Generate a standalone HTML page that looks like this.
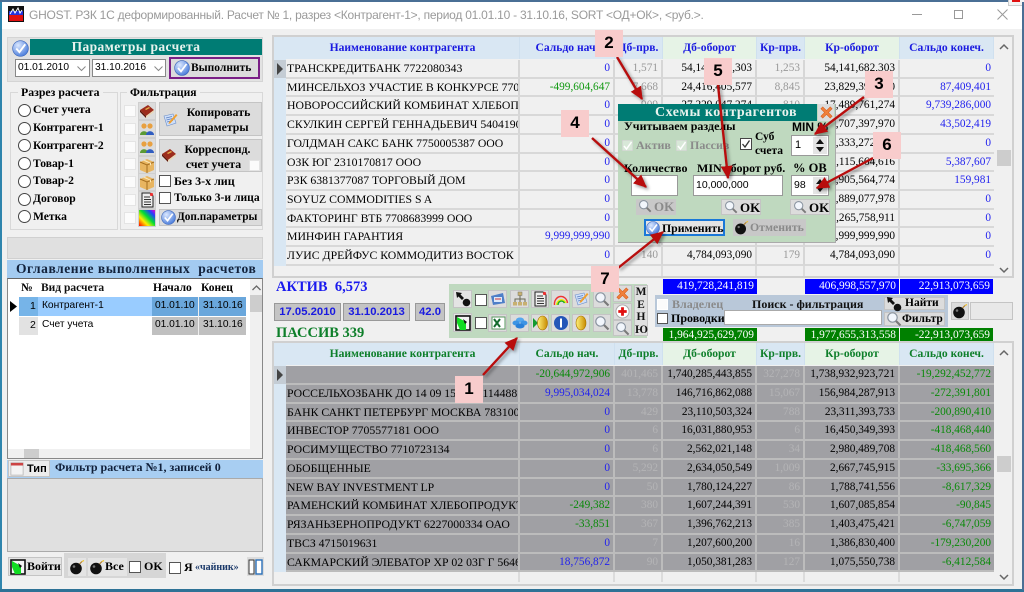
<!DOCTYPE html>
<html><head><meta charset="utf-8">
<style>
*{box-sizing:border-box}
html,body{margin:0;padding:0}
body{width:1024px;height:592px;overflow:hidden;position:relative;background:#fff;font-family:"Liberation Serif","Noto Serif CJK SC",serif;color:#000;filter:blur(.3px)}
.a{position:absolute;white-space:nowrap}
.s{font-family:"Liberation Sans","Noto Sans CJK SC",sans-serif}
.b{font-weight:bold}
.cb{position:absolute;width:12px;height:12px;background:#fff;border:1px solid #555}
.cbl{position:absolute;width:12px;height:12px;background:#fbfbfb;border:1px solid #e4e4e4}
.rd{position:absolute;width:13px;height:13px;border-radius:50%;background:#fff;border:1px solid #444}
.ib{position:absolute;width:18px;height:18px;background:#dcdcdc;border:1px solid #cfcfcf}
.btn{position:absolute;background:#dcdcdc;border:1px solid #c4c4c4;white-space:nowrap}
.ib svg,.btn svg{position:absolute}
.tb{position:absolute;background:#f0f0f0;border:2px solid #d0d0d0}
.rw{position:absolute;display:flex;height:18.75px;font-size:11.3px;line-height:17px}
.rw div{overflow:hidden;white-space:nowrap;text-align:right;padding-right:3px;border-right:2px solid #d6d6d6;border-bottom:2px solid #d8d8d8;height:18.75px}
.rw div:nth-child(1){width:234px;text-align:left;padding:0 0 0 1px;font-size:11.75px}
.rw div:nth-child(2){width:95px}.rw div:nth-child(3){width:48px;color:#999}.rw div:nth-child(4){width:94px}.rw div:nth-child(5){width:48px;color:#999}.rw div:nth-child(6){width:95px}.rw div:nth-child(7){width:94px;border-right:0}
.top div{background:#f0f0f0}
.bot div{background:#a0a0a4;border-color:#bcbcbc}
.bot div:nth-child(3),.bot div:nth-child(5){color:#b4b4b6}
.stub,.stub div{height:10px!important}
.stub div{background:#f0f0f0!important;border-bottom:0;border-color:#dcdcdc!important}
.u{color:#2222ee}.g{color:#119911}
.bot .g{color:#0a8a0a}
.hd{position:absolute;display:flex;height:22px;font-weight:bold;font-size:11.6px;line-height:21px;text-align:center}
.hd div{border-right:1px solid #cfe0ef;overflow:hidden;white-space:nowrap}
.hd .bl{background:#d9e7f3}.hd .gr{background:#e6f3e6}
.hu{color:#1a1ae0}.hg{color:#0e7f2a}
.pk{position:absolute;width:28px;height:27px;background:#f8cccc;font:bold 17px "Liberation Sans",sans-serif;text-align:center;line-height:26px}
.tot{position:absolute;color:#fff;text-align:right;padding-right:3px;font-size:11.4px;line-height:15px;height:15px}
.date{position:absolute;background:#c4c4c4;border:1px solid #999;color:#1a1ae0;font:bold 11.3px/16px "Liberation Sans",sans-serif;text-align:center;height:18px}
.rad{position:absolute;left:33px;font-weight:bold;font-size:11.6px;line-height:14px;white-space:nowrap}
</style></head><body>
<svg width="0" height="0" style="position:absolute">
<defs>
<radialGradient id="gc" cx=".35" cy=".3" r=".8"><stop offset="0" stop-color="#dbe8ff"/><stop offset="1" stop-color="#3f74d8"/></radialGradient>
<linearGradient id="gy" x1="0" x2="1"><stop offset="0" stop-color="#fff27a"/><stop offset="1" stop-color="#c88a00"/></linearGradient>
<linearGradient id="rb" x1="0" y1="1" x2="1" y2="0"><stop offset="0" stop-color="#ff0000"/><stop offset=".3" stop-color="#ffee00"/><stop offset=".55" stop-color="#00dd33"/><stop offset=".8" stop-color="#2040ff"/><stop offset="1" stop-color="#ee00cc"/></linearGradient>
<marker id="ah" markerWidth="5.5" markerHeight="5" refX="5" refY="2.5" orient="auto"><path d="M0 0L5.5 2.5L0 5z" fill="#b80d0d"/></marker>
<symbol id="chk" viewBox="0 0 16 16"><circle cx="8" cy="8" r="7.4" fill="url(#gc)" stroke="#3a64b8" stroke-width=".6"/><path d="M4 8l3 3.4L12.5 4" fill="none" stroke="#fff" stroke-width="1.8"/></symbol>
<symbol id="book" viewBox="0 0 16 16"><path d="M1 7L9 2l6 5-8 6z" fill="#9c2c1c"/><path d="M1 7l6 6v2L1 9z" fill="#5d1408"/><path d="M7 13l8-6v2l-8 6z" fill="#e8d8b8"/><path d="M6 6l4-2 1 1-4 2z" fill="#e6b04a"/></symbol>
<symbol id="ppl" viewBox="0 0 16 16"><circle cx="5" cy="5" r="2.6" fill="#e8a040"/><path d="M1 14c0-5 8-5 8 0z" fill="#5a9a34"/><circle cx="11" cy="5" r="2.6" fill="#e8a040"/><path d="M7 14c0-5 8-5 8 0z" fill="#2f5cc0"/></symbol>
<symbol id="box" viewBox="0 0 16 16"><path d="M1 5l7-3 7 3v8l-7 3-7-3z" fill="#e8b560"/><path d="M1 5l7 3 7-3M8 8v8" fill="none" stroke="#a56f20"/><path d="M4 3.5l7 3v2l1-.5v-2L6 3z" fill="#fbe7b8"/></symbol>
<symbol id="doc" viewBox="0 0 16 16"><path d="M3 1h8l3 3v11H3z" fill="#eee" stroke="#222"/><path d="M5 5h6M5 7.5h7M5 10h7M5 12.5h7" stroke="#333"/><circle cx="12.5" cy="2.5" r="1.6" fill="#e33"/></symbol>
<symbol id="rain" viewBox="0 0 16 16"><rect width="16" height="16" fill="url(#rb)"/></symbol>
<symbol id="edit" viewBox="0 0 16 16"><path d="M2 4l9-2 3 9-9 3z" fill="#cfe0fa" stroke="#6d8fc8" stroke-width=".6"/><path d="M4 6l6-1.5M4.5 8l6-1.5M5 10l6-1.5" stroke="#5a7ec0" stroke-width=".7"/><path d="M7 10l7-8 1.5 1.2-7 8L6.5 12z" fill="#f0a030"/></symbol>
<symbol id="bomb" viewBox="0 0 16 16"><circle cx="7" cy="9.5" r="5.8" fill="#111"/><circle cx="5" cy="7.5" r="1.3" fill="#777"/><path d="M10.5 5L13 2.5" stroke="#b08030" stroke-width="1.2"/><path d="M13 2.5l2-1" stroke="#f0c020"/></symbol>
<symbol id="lens" viewBox="0 0 16 16"><circle cx="6.5" cy="6.5" r="4.7" fill="#f2f6fc" stroke="#8a94a0" stroke-width="1.2"/><path d="M10 10l4.5 4.5" stroke="#7a7a7a" stroke-width="2.2"/></symbol>
<symbol id="arr" viewBox="0 0 16 16"><path d="M1 1l6 1-1.500 1.500L9 7 7 9 3.500 5.500 2 7z" fill="#111"/><circle cx="11.500" cy="11.500" r="3.800" fill="#111"/></symbol>
<symbol id="door" viewBox="0 0 16 16"><rect x="1" y="1" width="14" height="14" fill="#f4f4f4" stroke="#111" stroke-width="1.600"/><path d="M2 2l9 5v8H5L2 8z" fill="#11dd22"/><path d="M8 4l4 3-2 2z" fill="#111"/></symbol>
<symbol id="x" viewBox="0 0 16 16"><path d="M2 4l2-2 4 4 4-4 2 2-4 4 4 4-2 2-4-4-4 4-2-2 4-4z" fill="#f0803a" stroke="#d86020" stroke-width=".6"/></symbol>
<symbol id="coin" viewBox="0 0 16 16"><ellipse cx="8" cy="8" rx="5" ry="7" fill="url(#gy)" stroke="#a87400" stroke-width=".6"/></symbol>
<symbol id="info" viewBox="0 0 16 16"><circle cx="8" cy="8" r="7" fill="#2456b8"/><rect x="7" y="3.500" width="2" height="9" fill="#fff"/></symbol>
<symbol id="xl" viewBox="0 0 16 16"><rect x="2" y="2" width="13" height="12" fill="#fff" stroke="#5a9a60"/><path d="M4 4l6 8M10 4l-6 8" stroke="#136b2e" stroke-width="2"/></symbol>
<symbol id="tree" viewBox="0 0 16 16"><rect x="6" y="1" width="4" height="3.500" fill="#c8b070" stroke="#776"  stroke-width=".5"/><path d="M8 4.500V8M3 11V8h10v3M8 8v3" stroke="#665" fill="none"/><rect x="1" y="11" width="4" height="3.500" fill="#c8b070"/><rect x="6" y="11" width="4" height="3.500" fill="#c8b070"/><rect x="11" y="11" width="4" height="3.500" fill="#c8b070"/></symbol>
<symbol id="cal" viewBox="0 0 16 16"><path d="M1 5l12-3 2 10-12 2z" fill="#4e7fc8"/><rect x="4" y="6" width="8" height="5" fill="#dce8fa"/><path d="M5 8h6" stroke="#c33"/></symbol>
<symbol id="arc" viewBox="0 0 16 16"><path d="M1.500 14A6.500 7.500 0 0 1 14.500 12" fill="none" stroke="#e33" stroke-width="1.400"/><path d="M3.500 14A5 5.500 0 0 1 13 12" fill="none" stroke="#ee0" stroke-width="1.400"/><path d="M5 14A3.500 4 0 0 1 11.500 12" fill="none" stroke="#2a2" stroke-width="1.400"/></symbol>
<symbol id="cloud" viewBox="0 0 16 16"><ellipse cx="8" cy="5" rx="4" ry="2.500" fill="#56a8ee"/><ellipse cx="4" cy="8" rx="3.500" ry="2.500" fill="#3e94e4"/><ellipse cx="12" cy="8" rx="3.500" ry="2.500" fill="#3e94e4"/><ellipse cx="8" cy="11" rx="4.500" ry="2.500" fill="#2a80d8"/></symbol>
<symbol id="plus" viewBox="0 0 16 16"><circle cx="8" cy="8" r="7" fill="#fff" stroke="#aaa"/><path d="M8 3.500v9M3.500 8h9" stroke="#e01010" stroke-width="3"/></symbol>
<symbol id="cal2" viewBox="0 0 16 16"><rect x="1" y="1" width="14" height="14" fill="#f4f4f4" stroke="#bbb"/><rect x="1" y="1" width="14" height="3" fill="#cc4444"/></symbol>
</defs></svg>

<!-- window frame -->
<div class="a" style="left:0;top:0;width:1024px;height:2px;background:#4a6f95"></div>
<svg class="a" style="left:8px;top:6px" width="16" height="16" viewBox="0 0 16 16"><rect width="16" height="16" fill="#111"/><rect x="1" y="5" width="14" height="5" fill="#eef"/><rect x="1" y="9" width="14" height="6" fill="#e01010"/><rect x="1" y="5" width="14" height="4" fill="#2233dd"/><path d="M2 8l3-5 2 4 3-5 2 5 2-3" stroke="#fff" fill="none"/></svg>
<div class="a s" style="left:29px;top:7px;font-size:12px;line-height:16px;color:#9a9a9a;letter-spacing:-.02em">GHOST. РЗК 1С деформированный. Расчет № 1, разрез &lt;Контрагент-1&gt;, период 01.01.10 - 31.10.16, SORT &lt;ОД+ОК&gt;, &lt;руб.&gt;.</div>
<div class="a" style="left:912px;top:14px;width:10px;height:1px;background:#999"></div>
<div class="a" style="left:954px;top:10px;width:9px;height:9px;border:1px solid #999"></div>
<svg class="a" style="left:997px;top:9px" width="11" height="11"><path d="M.5.500l10 10M10.500.500l-10 10" stroke="#999"/></svg>
<div class="a" style="left:1008px;top:0;width:16px;height:6px;background:#f4f4f4;border-left:1px solid #ccc;border-bottom:1px solid #ccc"></div>
<div class="a" style="left:1012px;top:0;width:8px;height:2px;background:#e01010"></div>
<div class="a" style="left:2px;top:29px;width:1020px;height:560px;background:#f0f0f0"></div>
<div class="a" style="left:0;top:2px;width:2px;height:588px;background:#2f85ad"></div>
<div class="a" style="left:0;top:589px;width:1024px;height:3px;background:#2e7296"></div>
<div class="a" style="left:1022px;top:2px;width:2px;height:588px;background:#4a6f95"></div>

<!-- left top -->
<div class="a" style="left:7px;top:37px;width:256px;height:45px;background:#e2e2e2;border:1px solid #d4d4d4"></div>
<svg class="a" style="left:12px;top:40px" width="17" height="17"><use href="#chk"/></svg>
<div class="a b" style="left:30px;top:39px;width:232px;height:16px;background:#007c74;color:#e8f3ee;text-align:center;font-size:13.5px;line-height:15px;letter-spacing:.4px;padding-right:20px">Параметры расчета</div>
<div class="a s" style="left:15px;top:59px;width:75px;height:18px;background:#fff;border:1px solid #888;font-size:10.200px;line-height:15px;padding-left:2px">01.01.2010</div>
<div class="a s" style="left:92px;top:59px;width:74px;height:18px;background:#fff;border:1px solid #888;font-size:10.200px;line-height:15px;padding-left:2px">31.10.2016</div>
<svg class="a" style="left:77px;top:66px" width="9" height="6"><path d="M.5.500L4.500 4.500 8.500.500" fill="none" stroke="#888"/></svg>
<svg class="a" style="left:154px;top:66px" width="9" height="6"><path d="M.5.500L4.500 4.500 8.500.500" fill="none" stroke="#888"/></svg>
<div class="a" style="left:169px;top:57px;width:91px;height:22px;background:#dcdcdc;border:2px solid #7a1f86"></div>
<svg class="a" style="left:174px;top:60px" width="16" height="16"><use href="#chk"/></svg>
<div class="a b" style="left:191px;top:60px;font-size:11.500px;line-height:16px">Выполнить</div>

<!-- groups -->
<div class="a" style="left:10px;top:92px;width:108px;height:138px;border:1px solid #d8d8d8"></div>
<div class="a b" style="left:18px;top:85px;padding:0 3px;background:#f0f0f0;font-size:11.800px;line-height:15px">Разрез расчета</div>
<div class="a" style="left:120px;top:92px;width:143px;height:138px;border:1px solid #d8d8d8"></div>
<div class="a b" style="left:127px;top:85px;padding:0 3px;background:#f0f0f0;font-size:11.600px;line-height:15px">Фильтрация</div>

<div class="rd" style="left:18px;top:104px"></div><div class="rad" style="top:103px">Счет учета</div>
<div class="rd" style="left:18px;top:122px"></div><div class="rad" style="top:121px">Контрагент-1</div>
<div class="rd" style="left:18px;top:139px"></div><div class="rad" style="top:139px">Контрагент-2</div>
<div class="rd" style="left:18px;top:157px"></div><div class="rad" style="top:157px">Товар-1</div>
<div class="rd" style="left:18px;top:175px"></div><div class="rad" style="top:174px">Товар-2</div>
<div class="rd" style="left:18px;top:193px"></div><div class="rad" style="top:192px">Договор</div>
<div class="rd" style="left:18px;top:210px"></div><div class="rad" style="top:210px">Метка</div>

<div class="cbl" style="left:124px;top:105px"></div><div class="ib" style="left:138px;top:102px"><svg style="left:0;top:0" width="16" height="16"><use href="#book"/></svg></div>
<div class="cbl" style="left:124px;top:123px"></div><div class="ib" style="left:138px;top:120px"><svg style="left:0;top:0" width="16" height="16"><use href="#ppl"/></svg></div>
<div class="cbl" style="left:124px;top:141px"></div><div class="ib" style="left:138px;top:138px"><svg style="left:0;top:0" width="16" height="16"><use href="#ppl"/></svg></div>
<div class="cbl" style="left:124px;top:158px"></div><div class="ib" style="left:138px;top:156px"><svg style="left:0;top:0" width="16" height="16"><use href="#box"/></svg></div>
<div class="cbl" style="left:124px;top:176px"></div><div class="ib" style="left:138px;top:173px"><svg style="left:0;top:0" width="16" height="16"><use href="#box"/></svg></div>
<div class="cbl" style="left:124px;top:194px"></div><div class="ib" style="left:138px;top:191px"><svg style="left:0;top:0" width="16" height="16"><use href="#doc"/></svg></div>
<div class="cbl" style="left:124px;top:212px"></div><div class="ib" style="left:138px;top:209px"><svg style="left:0;top:0" width="16" height="16"><use href="#rain"/></svg></div>

<div class="btn b" style="left:159px;top:102px;width:103px;height:34px;font-size:11.800px;line-height:14.500px;text-align:center;padding:2px 0 0 16px"><svg style="left:2px;top:9px" width="16" height="16"><use href="#edit"/></svg>Копировать<br>параметры</div>
<div class="btn b" style="left:159px;top:139px;width:103px;height:33px;font-size:11.800px;line-height:14.500px;text-align:center;padding:2px 0 0 14px"><svg style="left:1px;top:7px" width="16" height="16"><use href="#book"/></svg>Корреспонд.<br><span style="margin-right:8px">счет учета</span></div>
<div class="cbl" style="left:249px;top:160px;width:11px;height:11px"></div>
<div class="cb" style="left:159px;top:175px"></div><div class="a b" style="left:174px;top:174px;font-size:12px;line-height:14px">Без 3-х лиц</div>
<div class="cb" style="left:159px;top:192px"></div><div class="a b" style="left:174px;top:191px;font-size:11.600px;line-height:14px">Только 3-и лица</div>
<div class="btn b" style="left:159px;top:209px;width:103px;height:17px;font-size:11.300px;line-height:15px;padding-left:17px"><svg style="left:1px;top:0" width="15" height="15"><use href="#chk"/></svg>Доп.параметры</div>

<div class="a" style="left:7px;top:237px;width:256px;height:22px;background:#e0e0e0;border:1px solid #d0d0d0"></div>

<!-- history -->
<div class="a b" style="left:7px;top:260px;width:256px;height:18px;background:#a3cbf1;color:#12223c;font-size:13.500px;line-height:17px;padding-left:9px;letter-spacing:.55px;white-space:pre">Оглавление выполненных  расчетов</div>
<div class="a" style="left:7px;top:278px;width:256px;height:181px;background:#fff;border:1px solid #888;border-top:1px solid #666"></div>
<div class="a b" style="left:21px;top:281px;font-size:11.500px;line-height:15px">№</div>
<div class="a b" style="left:41px;top:281px;font-size:11.500px;line-height:15px;color:#111">Вид расчета</div>
<div class="a b" style="left:153px;top:281px;font-size:11.500px;line-height:15px">Начало</div>
<div class="a b" style="left:201px;top:281px;font-size:11.500px;line-height:15px">Конец</div>
<div class="a" style="left:19px;top:297px;width:19px;height:19px;background:#76b4e8"></div>
<div class="a" style="left:38px;top:297px;width:114px;height:19px;background:#99ccff"></div>
<div class="a" style="left:152px;top:297px;width:94px;height:19px;background:#6aa7dc"></div>
<div class="a" style="left:19px;top:317px;width:19px;height:18px;background:#e2e2e2"></div>
<div class="a" style="left:152px;top:317px;width:94px;height:18px;background:#c0c0c0"></div>
<div class="a" style="left:198px;top:297px;width:1px;height:38px;background:#eee"></div>
<svg class="a" style="left:10px;top:301px" width="7" height="11"><path d="M0 0l7 5.500L0 11z" fill="#000"/></svg>
<div class="a s" style="left:30px;top:299px;font-size:10.500px;line-height:14px">1</div>
<div class="a s" style="left:30px;top:318px;font-size:10.500px;line-height:14px">2</div>
<div class="a s" style="left:42px;top:299px;font-size:10.200px;line-height:14px">Контрагент-1</div>
<div class="a s" style="left:42px;top:318px;font-size:10.200px;line-height:14px">Счет учета</div>
<div class="a s" style="left:155px;top:299px;font-size:10.200px;line-height:14px">01.01.10</div>
<div class="a s" style="left:155px;top:318px;font-size:10.200px;line-height:14px">01.01.10</div>
<div class="a s" style="left:203px;top:299px;font-size:10.200px;line-height:14px">31.10.16</div>
<div class="a s" style="left:203px;top:318px;font-size:10.200px;line-height:14px">31.10.16</div>
<div class="a" style="left:250px;top:279px;width:12px;height:170px;background:#f0f0f0"></div>
<div class="a" style="left:250px;top:295px;width:12px;height:17px;background:#cdcdcd"></div>
<svg class="a" style="left:252px;top:285px" width="9" height="6"><path d="M.5 5L4.500 1 8.500 5" fill="none" stroke="#666" stroke-width="1.300"/></svg>
<div class="a" style="left:8px;top:449px;width:254px;height:9px;background:#f0f0f0"></div>
<div class="a" style="left:24px;top:449px;width:15px;height:9px;background:#cdcdcd"></div>

<div class="a" style="left:7px;top:460px;width:256px;height:18px;background:#a8cef2"></div>
<div class="btn b s" style="left:8px;top:460px;width:42px;height:17px;background:#ececec;font-size:11px;line-height:16px;padding-left:18px"><svg style="left:1px;top:1px" width="14" height="14"><use href="#cal2"/></svg>Тип</div>
<div class="a b" style="left:55px;top:460px;font-size:12px;line-height:15px;color:#10203a">Фильтр расчета №1, записей 0</div>
<div class="a" style="left:7px;top:478px;width:256px;height:74px;background:#e0e0e0;border:1px solid #aaa"></div>

<div class="btn b" style="left:8px;top:557px;width:54px;height:19px;background:#e4e4e4;font-size:12px;line-height:17px;padding-left:18px"><svg style="left:1px;top:1px" width="16" height="16"><use href="#door"/></svg>Войти</div>
<div class="a" style="left:64px;top:553px;width:102px;height:25px;background:#d6d6d6"></div>
<div class="btn" style="left:68px;top:558px;width:18px;height:18px;background:#e4e4e4;border:0"><svg style="left:1px;top:1px" width="16" height="16"><use href="#bomb"/></svg></div>
<div class="btn b" style="left:88px;top:558px;width:39px;height:18px;background:#e4e4e4;border:0;font-size:12px;line-height:16px;padding-left:17px"><svg style="left:1px;top:1px" width="16" height="16"><use href="#bomb"/></svg>Все</div>
<div class="cb" style="left:129px;top:561px"></div><div class="a b" style="left:144px;top:559px;font-size:12px;line-height:15px">OK</div>
<div class="cb" style="left:169px;top:562px"></div><div class="a b" style="left:184px;top:560px;font-size:12px;line-height:15px">Я</div>
<div class="a b" style="left:195px;top:561px;font-size:10px;line-height:14px;color:#1c3a6a">«чайник»</div>
<svg class="a" style="left:247px;top:557px" width="17" height="19" viewBox="0 0 17 19"><rect width="17" height="19" fill="#dcdcdc"/><rect x="2" y="3" width="5" height="14" fill="#fff" stroke="#333"/><rect x="9" y="3" width="6" height="14" fill="#fff" stroke="#2a6fb8" stroke-width="1.400"/></svg>

<!-- top table -->
<div class="tb" style="left:272px;top:35px;width:742px;height:243px"></div>
<div class="a" style="left:274px;top:37px;width:12px;height:229px;background:#d9e7f3"></div>
<div class="hd hu" style="left:286px;top:37px"><div class="bl" style="width:234px">Наименование контрагента</div><div class="bl" style="width:95px">Сальдо нач.</div><div class="bl" style="width:48px">Дб-прв.</div><div class="gr" style="width:94px">Дб-оборот</div><div class="bl" style="width:48px">Кр-прв.</div><div class="gr" style="width:95px">Кр-оборот</div><div class="bl" style="width:94px">Сальдо конеч.</div></div>
<div class="a" style="left:274px;top:60px;width:12px;height:18px;background:#c4ccd4"></div>
<svg class="a" style="left:277px;top:63px" width="6" height="12"><path d="M0 0l6 6-6 6z" fill="#444"/></svg>
<div class="rw top" style="left:286px;top:60px"><div>ТРАНСКРЕДИТБАНК 7722080343</div><div class="u">0</div><div>1,571</div><div>54,141,682,303</div><div>1,253</div><div>54,141,682,303</div><div class="u">0</div></div>
<div class="rw top" style="left:286px;top:78.700px"><div>МИНСЕЛЬХОЗ УЧАСТИЕ В КОНКУРСЕ 7704</div><div class="g">-499,604,647</div><div>7,668</div><div>24,416,405,577</div><div>8,845</div><div>23,829,391,000</div><div class="u">87,409,401</div></div>
<div class="rw top" style="left:286px;top:97.400px"><div>НОВОРОССИЙСКИЙ КОМБИНАТ ХЛЕБОПРОДУКТОВ</div><div class="u">0</div><div>909</div><div>27,229,047,274</div><div>810</div><div>17,489,761,274</div><div class="u">9,739,286,000</div></div>
<div class="rw top" style="left:286px;top:116.100px"><div>СКУЛКИН СЕРГЕЙ ГЕННАДЬЕВИЧ 5404190</div><div class="u">0</div><div>52</div><div>14,750,900,389</div><div>60</div><div>14,707,397,970</div><div class="u">43,502,419</div></div>
<div class="rw top" style="left:286px;top:134.800px"><div>ГОЛДМАН САКС БАНК 7750005387 ООО</div><div class="u">0</div><div>40</div><div>13,333,272,100</div><div>44</div><div>13,333,272,100</div><div class="u">0</div></div>
<div class="rw top" style="left:286px;top:153.500px"><div>ОЗК ЮГ 2310170817 ООО</div><div class="u">0</div><div>31</div><div>12,121,052,223</div><div>35</div><div>12,115,664,616</div><div class="u">5,387,607</div></div>
<div class="rw top" style="left:286px;top:172.200px"><div>РЗК 6381377087 ТОРГОВЫЙ ДОМ</div><div class="u">0</div><div>29</div><div>11,905,724,755</div><div>30</div><div>11,905,564,774</div><div class="u">159,981</div></div>
<div class="rw top" style="left:286px;top:190.900px"><div>SOYUZ COMMODITIES S A</div><div class="u">0</div><div>20</div><div>10,889,077,978</div><div>22</div><div>10,889,077,978</div><div class="u">0</div></div>
<div class="rw top" style="left:286px;top:209.600px"><div>ФАКТОРИНГ ВТБ 7708683999 ООО</div><div class="u">0</div><div>18</div><div>10,265,758,911</div><div>19</div><div>10,265,758,911</div><div class="u">0</div></div>
<div class="rw top" style="left:286px;top:228.300px"><div>МИНФИН ГАРАНТИЯ</div><div class="u">9,999,999,990</div><div>12</div><div>9,999,999,990</div><div>14</div><div>9,999,999,990</div><div class="u">0</div></div>
<div class="rw top" style="left:286px;top:247px"><div>ЛУИС ДРЕЙФУС КОММОДИТИЗ ВОСТОК</div><div class="u">0</div><div>140</div><div>4,784,093,090</div><div>179</div><div>4,784,093,090</div><div class="u">0</div></div>
<div class="rw stub" style="left:286px;top:266px"><div></div><div></div><div></div><div></div><div></div><div></div><div></div></div>
<svg class="a" style="left:999px;top:43px" width="10" height="7"><path d="M1 6L5 2l4 4" fill="none" stroke="#666" stroke-width="1.500"/></svg>
<svg class="a" style="left:999px;top:267px" width="10" height="7"><path d="M1 1l4 4 4-4" fill="none" stroke="#666" stroke-width="1.500"/></svg>
<div class="a" style="left:997px;top:150px;width:14px;height:16px;background:#cdcdcd"></div>

<!-- middle -->
<div class="a b" style="left:276px;top:279px;font-size:14.500px;line-height:17px;color:#1a1aee;white-space:pre">АКТИВ  6,573</div>
<div class="date" style="left:274px;top:303px;width:67px">17.05.2010</div>
<div class="date" style="left:343px;top:303px;width:67px">31.10.2013</div>
<div class="date" style="left:415px;top:303px;width:30px">42.0</div>
<div class="a b" style="left:276px;top:325px;font-size:14.500px;line-height:17px;color:#0e7f2a">ПАССИВ 339</div>

<div class="a" style="left:449px;top:284px;width:198px;height:54px;background:#bfd9bf"></div>
<div class="btn" style="left:453px;top:290px;width:19px;height:18px;background:#e4e4e4"><svg style="left:1px;top:0" width="16" height="16"><use href="#arr"/></svg></div>
<div class="cb" style="left:475px;top:294px"></div>
<div class="btn" style="left:488px;top:290px;width:19px;height:18px"><svg style="left:1px;top:0" width="16" height="16"><use href="#cal"/></svg></div>
<div class="btn" style="left:510px;top:290px;width:19px;height:18px"><svg style="left:1px;top:0" width="16" height="16"><use href="#tree"/></svg></div>
<div class="btn" style="left:531px;top:290px;width:18px;height:18px"><svg style="left:0;top:0" width="16" height="16"><use href="#doc"/></svg></div>
<div class="btn" style="left:551px;top:290px;width:19px;height:18px"><svg style="left:1px;top:0" width="16" height="16"><use href="#arc"/></svg></div>
<div class="btn" style="left:572px;top:290px;width:18px;height:18px"><svg style="left:0;top:0" width="16" height="16"><use href="#edit"/></svg></div>
<div class="btn" style="left:593px;top:290px;width:18px;height:18px"><svg style="left:0;top:0" width="16" height="16"><use href="#lens"/></svg></div>
<div class="btn" style="left:453px;top:313px;width:19px;height:19px;background:#e4e4e4"><svg style="left:1px;top:1px" width="16" height="16"><use href="#door"/></svg></div>
<div class="cb" style="left:475px;top:317px"></div>
<div class="btn" style="left:488px;top:314px;width:19px;height:18px"><svg style="left:1px;top:0" width="16" height="16"><use href="#xl"/></svg></div>
<div class="btn" style="left:510px;top:314px;width:19px;height:18px"><svg style="left:1px;top:0" width="16" height="16"><use href="#cloud"/></svg></div>
<div class="btn" style="left:531px;top:314px;width:18px;height:18px"><svg style="left:0;top:0" width="16" height="16"><path d="M1 3l5 5-5 5z" fill="#149a30"/><ellipse cx="10.500" cy="8" rx="5" ry="7" fill="url(#gy)" stroke="#a87400" stroke-width=".6"/></svg></div>
<div class="btn" style="left:551px;top:314px;width:19px;height:18px"><svg style="left:1px;top:0" width="16" height="16"><use href="#info"/></svg></div>
<div class="btn" style="left:572px;top:314px;width:18px;height:18px"><svg style="left:0;top:0" width="16" height="16"><use href="#coin"/></svg></div>
<div class="btn" style="left:593px;top:314px;width:18px;height:18px"><svg style="left:0;top:0" width="16" height="16"><use href="#lens"/></svg></div>
<div class="btn" style="left:613px;top:285px;width:19px;height:17px"><svg style="left:1px;top:0" width="15" height="15"><use href="#x"/></svg></div>
<div class="btn" style="left:613px;top:303px;width:19px;height:17px"><svg style="left:1px;top:0" width="15" height="15"><use href="#plus"/></svg></div>
<div class="btn" style="left:613px;top:320px;width:19px;height:16px"><svg style="left:1px;top:0" width="15" height="15"><use href="#lens"/></svg></div>
<div class="btn b" style="left:634px;top:285px;width:14px;height:51px;font-size:11.500px;line-height:12.500px;text-align:center;color:#111;background:#e0e0e0">М<br>Е<br>Н<br>Ю</div>

<div class="tot" style="left:663px;top:279px;width:94px;background:#0000ff">419,728,241,819</div>
<div class="tot" style="left:805px;top:279px;width:94px;background:#0000ff">406,998,557,970</div>
<div class="tot" style="left:900px;top:279px;width:93px;background:#0000ff">22,913,073,659</div>
<div class="tot" style="left:663px;top:328px;width:94px;background:#008000">1,964,925,629,709</div>
<div class="tot" style="left:805px;top:328px;width:94px;background:#008000">1,977,655,313,558</div>
<div class="tot" style="left:900px;top:328px;width:93px;background:#008000">-22,913,073,659</div>

<div class="a" style="left:655px;top:295px;width:293px;height:32px;background:#b9c8d9"></div>
<div class="cbl" style="left:657px;top:299px;width:11px;height:11px;border-color:#fff"></div>
<div class="a b" style="left:672px;top:297px;font-size:12px;line-height:15px;color:#8a8a8a">Владелец</div>
<div class="a b" style="left:752px;top:297px;font-size:12px;line-height:15px;color:#111">Поиск - фильтрация</div>
<div class="cb" style="left:657px;top:313px;width:11px;height:11px"></div>
<div class="a b" style="left:671px;top:311px;font-size:12px;line-height:15px">Проводки</div>
<div class="a" style="left:724px;top:310px;width:158px;height:15px;background:#fff;border:1px solid #aaa"></div>
<div class="btn b" style="left:884px;top:297px;width:61px;height:13px;font-size:11.500px;line-height:11px;padding-left:20px"><svg style="left:1px;top:-2px" width="16" height="16"><use href="#arr"/></svg>Найти</div>
<div class="btn b" style="left:884px;top:312px;width:61px;height:14px;font-size:11.500px;line-height:12px;padding-left:17px"><svg style="left:1px;top:-2px" width="16" height="16"><use href="#lens"/></svg>Фильтр</div>
<div class="btn" style="left:951px;top:302px;width:18px;height:18px;background:#dcdcdc"><svg style="left:0;top:0" width="16" height="16"><use href="#bomb"/></svg></div>
<div class="btn" style="left:970px;top:302px;width:43px;height:18px;background:#e8e8e8"></div>

<!-- bottom table -->
<div class="tb" style="left:272px;top:341px;width:742px;height:245px"></div>
<div class="a" style="left:274px;top:343px;width:12px;height:229px;background:#d9e7f3"></div>
<div class="hd hg" style="left:286px;top:343px"><div class="bl" style="width:234px">Наименование контрагента</div><div class="bl" style="width:95px">Сальдо нач.</div><div class="bl" style="width:48px">Дб-прв.</div><div class="gr" style="width:94px">Дб-оборот</div><div class="bl" style="width:48px">Кр-прв.</div><div class="gr" style="width:95px">Кр-оборот</div><div class="bl" style="width:94px">Сальдо конеч.</div></div>
<div class="a" style="left:274px;top:366px;width:12px;height:18px;background:#c4ccd4"></div>
<svg class="a" style="left:277px;top:369px" width="6" height="12"><path d="M0 0l6 6-6 6z" fill="#444"/></svg>
<div class="rw bot" style="left:286px;top:366px"><div></div><div class="g">-20,644,972,906</div><div>401,465</div><div>1,740,285,443,855</div><div>327,278</div><div>1,738,932,923,721</div><div class="g">-19,292,452,772</div></div>
<div class="rw bot" style="left:286px;top:384.750px"><div>РОССЕЛЬХОЗБАНК ДО 14 09 15 7725114488 ОАО</div><div class="u">9,995,034,024</div><div>13,778</div><div>146,716,862,088</div><div>15,067</div><div>156,984,287,913</div><div class="g">-272,391,801</div></div>
<div class="rw bot" style="left:286px;top:403.500px"><div>БАНК САНКТ ПЕТЕРБУРГ МОСКВА 7831000</div><div class="u">0</div><div>429</div><div>23,110,503,324</div><div>788</div><div>23,311,393,733</div><div class="g">-200,890,410</div></div>
<div class="rw bot" style="left:286px;top:422.250px"><div>ИНВЕСТОР 7705577181 ООО</div><div class="u">0</div><div>6</div><div>16,031,880,953</div><div>6</div><div>16,450,349,393</div><div class="g">-418,468,440</div></div>
<div class="rw bot" style="left:286px;top:441px"><div>РОСИМУЩЕСТВО 7710723134</div><div class="u">0</div><div>6</div><div>2,562,021,148</div><div>34</div><div>2,980,489,708</div><div class="g">-418,468,560</div></div>
<div class="rw bot" style="left:286px;top:459.750px"><div>ОБОБЩЕННЫЕ</div><div class="u">0</div><div>5,292</div><div>2,634,050,549</div><div>1,009</div><div>2,667,745,915</div><div class="g">-33,695,366</div></div>
<div class="rw bot" style="left:286px;top:478.500px"><div>NEW BAY INVESTMENT LP</div><div class="u">0</div><div>50</div><div>1,780,124,227</div><div>86</div><div>1,788,741,556</div><div class="g">-8,617,329</div></div>
<div class="rw bot" style="left:286px;top:497.250px"><div>РАМЕНСКИЙ КОМБИНАТ ХЛЕБОПРОДУКТОВ</div><div class="g">-249,382</div><div>380</div><div>1,607,244,391</div><div>530</div><div>1,607,085,854</div><div class="g">-90,845</div></div>
<div class="rw bot" style="left:286px;top:516px"><div>РЯЗАНЬЗЕРНОПРОДУКТ 6227000334 ОАО</div><div class="g">-33,851</div><div>367</div><div>1,396,762,213</div><div>385</div><div>1,403,475,421</div><div class="g">-6,747,059</div></div>
<div class="rw bot" style="left:286px;top:534.750px"><div>ТВСЗ 4715019631</div><div class="u">0</div><div>7</div><div>1,207,600,200</div><div>16</div><div>1,386,830,400</div><div class="g">-179,230,200</div></div>
<div class="rw bot" style="left:286px;top:553.500px"><div>САКМАРСКИЙ ЭЛЕВАТОР ХР 02 03Г Г 5646</div><div class="u">18,756,872</div><div>90</div><div>1,050,381,283</div><div>127</div><div>1,075,550,738</div><div class="g">-6,412,584</div></div>
<div class="rw stub" style="left:286px;top:572px"><div></div><div></div><div></div><div></div><div></div><div></div><div></div></div>
<svg class="a" style="left:999px;top:349px" width="10" height="7"><path d="M1 6L5 2l4 4" fill="none" stroke="#666" stroke-width="1.500"/></svg>
<svg class="a" style="left:999px;top:574px" width="10" height="7"><path d="M1 1l4 4 4-4" fill="none" stroke="#666" stroke-width="1.500"/></svg>
<div class="a" style="left:997px;top:456px;width:14px;height:16px;background:#cdcdcd"></div>

<!-- dialog -->
<div class="a" style="left:618px;top:104px;width:218px;height:139px;background:#bfd9bf;border-right:1px solid #aaa;border-bottom:1px solid #aaa"></div>
<div class="a b" style="left:618px;top:104px;width:199px;height:17px;background:#007c74;color:#e8f3ee;font-size:14px;line-height:17px;text-align:center;letter-spacing:.5px;padding-left:17px">Схемы контрагентов</div>
<div class="a" style="left:818px;top:104px;width:16px;height:17px;background:#dcdcdc"></div>
<svg class="a" style="left:819px;top:105px" width="15" height="15"><use href="#x"/></svg>
<div class="a b" style="left:624px;top:119px;font-size:12px;line-height:15px">Учитываем разделы</div>
<svg class="a" style="left:622px;top:140px" width="11" height="11"><rect width="11" height="11" fill="#d8e8d8" stroke="#ccc"/><path d="M2 6l2.500 3L9.500 2" fill="none" stroke="#fff" stroke-width="1.500"/></svg>
<div class="a b" style="left:636px;top:138px;font-size:12px;line-height:15px;color:#8a8a8a">Актив</div>
<svg class="a" style="left:676px;top:140px" width="11" height="11"><rect width="11" height="11" fill="#d8e8d8" stroke="#ccc"/><path d="M2 6l2.500 3L9.500 2" fill="none" stroke="#fff" stroke-width="1.500"/></svg>
<div class="a b" style="left:690px;top:138px;font-size:12px;line-height:15px;color:#8a8a8a">Пассив</div>
<svg class="a" style="left:740px;top:138px" width="12" height="12"><rect x=".5" y=".5" width="11" height="11" fill="#fff" stroke="#444"/><path d="M2.500 6l2.500 3L9.500 2.500" fill="none" stroke="#333" stroke-width="1.300"/></svg>
<div class="a b" style="left:755px;top:131px;font-size:11.500px;line-height:13.500px">Суб<br>счета</div>
<div class="a b s" style="left:792px;top:120px;font-size:12px;line-height:14px">MIN %</div>
<div class="a s" style="left:791px;top:135px;width:38px;height:21px;background:#fff;border:1px solid #999;font-size:11px;line-height:19px;padding-left:3px">1</div>
<div class="a" style="left:813px;top:137px;width:14px;height:17px;background:#e4e4e4"></div>
<svg class="a" style="left:814px;top:138px" width="12" height="15"><path d="M2 6l4-5 4 5zM2 9l4 5 4-5z" fill="#111"/></svg>
<div class="a b" style="left:624px;top:161px;font-size:12px;line-height:15px">Количество</div>
<div class="a b" style="left:697px;top:161px;font-size:12px;line-height:15px">MIN оборот руб.</div>
<div class="a b" style="left:793px;top:161px;font-size:12.500px;line-height:15px">% ОВ</div>
<div class="a" style="left:631px;top:175px;width:47px;height:21px;background:#fff;border:1px solid #999"></div>
<div class="a s" style="left:693px;top:175px;width:90px;height:21px;background:#fff;border:1px solid #999;font-size:10.500px;line-height:19px;padding-left:2px">10,000,000</div>
<div class="a s" style="left:791px;top:175px;width:38px;height:21px;background:#fff;border:1px solid #999;font-size:10.500px;line-height:19px;padding-left:2px">98</div>
<div class="a" style="left:813px;top:177px;width:14px;height:17px;background:#e4e4e4"></div>
<svg class="a" style="left:814px;top:178px" width="12" height="15"><path d="M2 6l4-5 4 5zM2 9l4 5 4-5z" fill="#111"/></svg>
<div class="btn b" style="left:636px;top:199px;width:40px;height:16px;background:#c8c8c8;border:0;color:#8a8a8a;font-size:13px;line-height:16px;padding-left:18px"><svg style="left:2px;top:0" width="14" height="14"><use href="#lens"/></svg>OK</div>
<div class="btn b" style="left:721px;top:199px;width:40px;height:16px;font-size:13px;line-height:16px;padding-left:18px"><svg style="left:2px;top:0" width="14" height="14"><use href="#lens"/></svg>OK</div>
<div class="btn b" style="left:790px;top:199px;width:40px;height:16px;font-size:13px;line-height:16px;padding-left:18px"><svg style="left:2px;top:0" width="14" height="14"><use href="#lens"/></svg>OK</div>
<div class="btn b" style="left:644px;top:219px;width:81px;height:17px;border:2px solid #1a78d8;background:#e4e4e4;font-size:11.800px;line-height:14px;padding-left:16px"><svg style="left:0;top:0" width="14" height="14"><use href="#chk"/></svg>Применить</div>
<div class="btn b" style="left:733px;top:219px;width:73px;height:17px;background:#c8c8c8;border:0;color:#8a8a8a;font-size:11.800px;line-height:17px;padding-left:17px"><svg style="left:1px;top:1px" width="15" height="15"><use href="#bomb"/></svg>Отменить</div>

<!-- arrows -->
<svg class="a" style="left:0;top:0;filter:drop-shadow(2px 2px 1.500px rgba(0,0,0,.4))" width="1024" height="592" fill="none" stroke="#b80d0d" stroke-width="2.400">
<path d="M483 375L517 338" marker-end="url(#ah)"/>
<path d="M617 57L642 99" marker-end="url(#ah)"/>
<path d="M864 97L815 134" marker-end="url(#ah)"/>
<path d="M592 138L646 187" marker-end="url(#ah)"/>
<path d="M718 85L728 178" marker-end="url(#ah)"/>
<path d="M873 158L817 188" marker-end="url(#ah)"/>
<path d="M618 268L663 232" marker-end="url(#ah)"/>
</svg>
<div class="pk" style="left:455px;top:376px">1</div>
<div class="pk" style="left:595px;top:30px">2</div>
<div class="pk" style="left:865px;top:71px">3</div>
<div class="pk" style="left:561px;top:110px">4</div>
<div class="pk" style="left:704px;top:58px">5</div>
<div class="pk" style="left:873px;top:132px">6</div>
<div class="pk" style="left:591px;top:266px;height:26px">7</div>
</body></html>
